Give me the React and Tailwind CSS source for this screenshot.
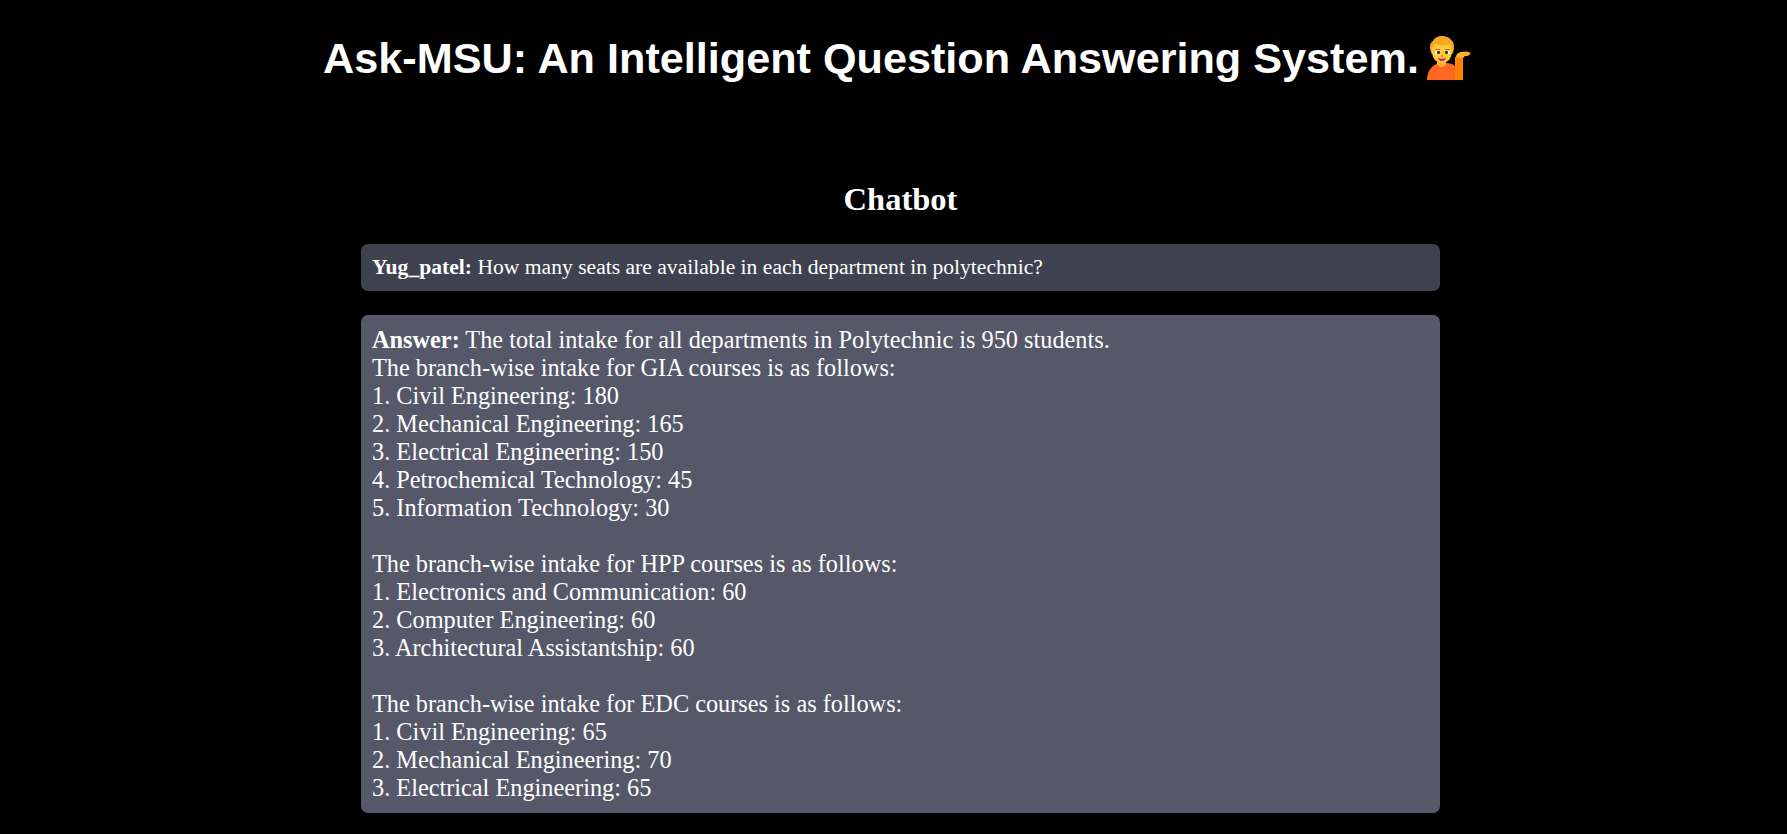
import React from "react";

const answerLines = [
  "The branch-wise intake for GIA courses is as follows:",
  "1. Civil Engineering: 180",
  "2. Mechanical Engineering: 165",
  "3. Electrical Engineering: 150",
  "4. Petrochemical Technology: 45",
  "5. Information Technology: 30",
  "",
  "The branch-wise intake for HPP courses is as follows:",
  "1. Electronics and Communication: 60",
  "2. Computer Engineering: 60",
  "3. Architectural Assistantship: 60",
  "",
  "The branch-wise intake for EDC courses is as follows:",
  "1. Civil Engineering: 65",
  "2. Mechanical Engineering: 70",
  "3. Electrical Engineering: 65",
];

// person tipping hand emoji, drawn by hand since no emoji font is installed
const TippingHand = () => (
  <svg viewBox="0 0 44 44" className="w-[44px] h-[44px] shrink-0 ml-[8px]">
    <path d="M0 44c0-10 6-16 13-17h6c4 0 7 1 9 3v14z" fill="#ff6723" />
    <path d="M28 21c3-1 6-1 8 0v23h-8z" fill="#ff8101" />
    <path d="M29 21c0-3 3-5 6-5 2 0 4-1 6 0 2 0 3 1 2 2-1 2-3 2-5 2l-2 2c-3 0-5 0-7-1z" fill="#ffb02e" />
    <path d="M10 26h9v2c-1 2-2 3-4.500 3S11 30 10 28z" fill="#ffb02e" />
    <path d="M3 11c0-3 1-5 3-6 1-3 5-5 9-5s7 1 9 4c2 1 3 4 3 7 0 3-1 6-2 7H5c-1-1-2-4-2-7z" fill="#f9a825" />
    <path d="M5 15c0-3 2-5 4-7 4 2 9 2 13 0 2 2 3 4 3 7 0 7-4 12-10 12S5 22 5 15z" fill="#ffc83d" />
    <rect x="8" y="13" width="5" height="1" fill="#d37034" />
    <rect x="18" y="13" width="5" height="1" fill="#d37034" />
    <rect x="8" y="15" width="5" height="3" rx="1" fill="#ffffff" />
    <rect x="18" y="15" width="5" height="3" rx="1" fill="#ffffff" />
    <rect x="10" y="15" width="3" height="3" rx="1" fill="#402a32" />
    <rect x="18" y="15" width="3" height="3" rx="1" fill="#402a32" />
    <rect x="14" y="19" width="2" height="2" fill="#ed9200" />
    <path d="M11 22c3 1 6 1 8 0-1 2-2 3-4 3s-3-1-4-3z" fill="#bb1d80" />
  </svg>
);

export default function App() {
  return (
    <div className="min-h-[834px] bg-black text-white font-['Liberation_Serif',serif]">
      <div className="flex justify-center items-center h-[116px] pl-[7px]">
        <h1 className="font-['Liberation_Sans',sans-serif] font-bold text-[43.2px] leading-[48px] flex items-center">
          Ask-MSU: An Intelligent Question Answering System.
          <TippingHand />
        </h1>
      </div>

      <div className="ml-[361px] w-[1079px] pb-[21px]">
        <h2 className="mt-[65px] text-center font-bold text-[32.500px] leading-[36px]">Chatbot</h2>

        <div className="mt-[27px] rounded-[7px] bg-[#40414f] px-[11px] py-[10px] text-[21.600px] leading-[27px]">
          <b>Yug_patel:</b> How many seats are available in each department in polytechnic?
        </div>

        <div className="mt-[24px] rounded-[7px] bg-[#565869] px-[11px] py-[11px] text-[24.300px] leading-[28px]">
          <div>
            <b>Answer:</b> The total intake for all departments in Polytechnic is 950 students.
          </div>
          {answerLines.map((line, i) => (
            <div key={i} className="h-[28px]">
              {line}
            </div>
          ))}
        </div>
      </div>
    </div>
  );
}
